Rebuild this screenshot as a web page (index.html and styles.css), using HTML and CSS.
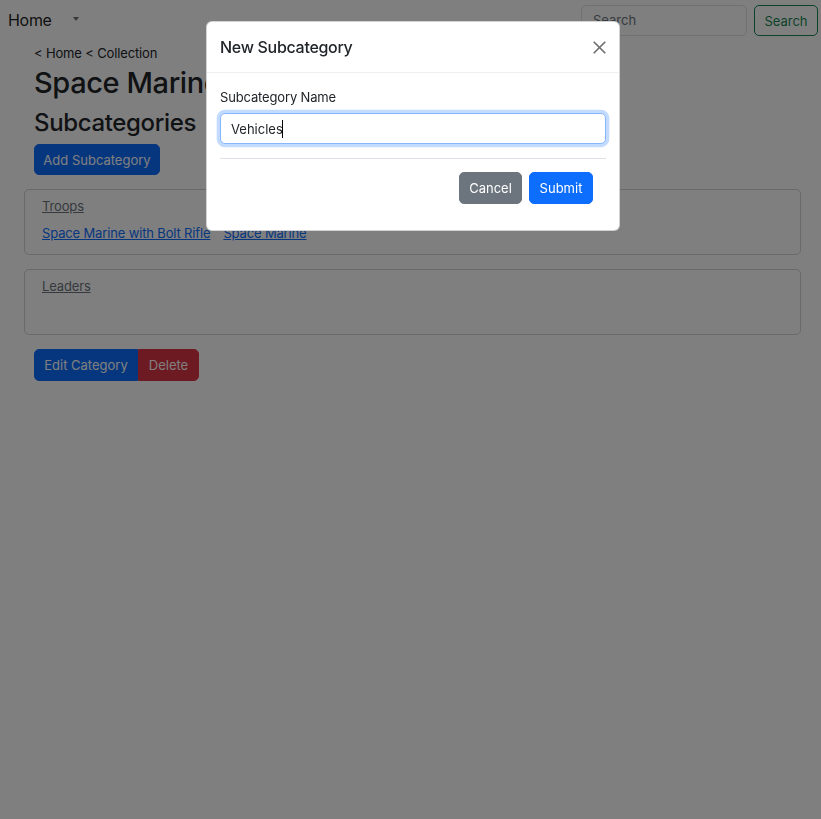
FILE: index.html
```html
<!DOCTYPE html>
<html lang="en">
<head>
<meta charset="utf-8">
<title>Space Marines</title>
<link rel="stylesheet" href="styles.css">
</head>
<body>
<nav class="navbar">
  <a class="brand" href="#">Home</a>
  <span class="dropdown-toggle"></span>
  <form class="search">
    <input class="search-input" type="text" placeholder="Search">
    <button class="btn btn-outline-success" type="button">Search</button>
  </form>
</nav>

<main class="page">
  <div class="head">
    <div class="crumbs">&lt; Home &lt; Collection</div>
    <h1 class="title">Space Marines</h1>
    <h2 class="subtitle">Subcategories</h2>
    <button class="btn btn-primary" type="button">Add Subcategory</button>
  </div>

  <section class="card">
    <a class="card-title" href="#">Troops</a>
    <div class="card-links">
      <a href="#">Space Marine with Bolt Rifle</a>
      <a href="#">Space Marine</a>
    </div>
  </section>

  <section class="card">
    <a class="card-title" href="#">Leaders</a>
    <div class="card-links"></div>
  </section>

  <div class="actions">
    <button class="btn btn-primary btn-left" type="button">Edit Category</button>
    <button class="btn btn-danger btn-right" type="button">Delete</button>
  </div>
</main>

<div class="backdrop"></div>

<div class="modal">
  <div class="modal-dialog">
    <div class="modal-header">
      <h5 class="modal-title">New Subcategory</h5>
      <button class="btn-close" type="button" aria-label="Close">
        <svg width="13" height="13" viewBox="0 0 13 13"><path d="M0.7 0.7 L12.3 12.3 M12.3 0.7 L0.7 12.3" stroke="#6c6c6c" stroke-width="1.6" fill="none"/></svg>
      </button>
    </div>
    <div class="modal-body">
      <label class="form-label" for="name">Subcategory Name</label>
      <div class="field">
        <input class="form-control" id="name" type="text" value="Vehicles">
        <span class="caret-mirror">Vehicles</span>
      </div>
      <div class="modal-footer">
        <button class="btn btn-secondary" type="button">Cancel</button>
        <button class="btn btn-primary" type="button">Submit</button>
      </div>
    </div>
  </div>
</div>
</body>
</html>
```

FILE: styles.css
```css
* { box-sizing: border-box; }

html, body {
  margin: 0;
  padding: 0;
}

body {
  font-family: Inter, "Liberation Sans", Arial, sans-serif;
  font-size: 13px;
  letter-spacing: -0.15px;
  line-height: 1.5;
  color: #212529;
  background: #fff;
  min-height: 819px;
}

/* Navbar */
.navbar {
  display: flex;
  align-items: center;
  height: 40px;
  padding: 0 3px 0 8px;
}

.brand {
  font-size: 16px;
  letter-spacing: -0.3px;
  color: rgba(0, 0, 0, 0.9);
  text-decoration: none;
  line-height: 24px;
}

.dropdown-toggle {
  display: inline-block;
  margin-left: 21px;
  margin-top: -2px;
  width: 0;
  height: 0;
  border-top: 4px solid rgba(0, 0, 0, 0.55);
  border-left: 3.5px solid transparent;
  border-right: 3.5px solid transparent;
}

.search {
  margin-left: auto;
  display: flex;
  gap: 7px;
  padding-top: 1px;
}

.search-input {
  width: 166px;
  height: 31px;
  border: 1px solid #dee2e6;
  border-radius: 5px;
  padding: 4px 11px;
  font: inherit;
  color: #212529;
  background: #fff;
}

.search-input::placeholder { color: #6c757d; }

/* Buttons */
.btn {
  display: inline-block;
  height: 31.4px;
  padding: 0 10px;
  font: inherit;
  font-size: 13px;
  line-height: 30.4px;
  border: 1px solid transparent;
  border-radius: 5px;
  background: transparent;
  cursor: pointer;
  white-space: nowrap;
}

.btn-primary { background: #0d6efd; border-color: #0d6efd; color: #fff; }
.btn-secondary { background: #6c757d; border-color: #6c757d; color: #fff; }
.btn-danger { background: #dc3545; border-color: #dc3545; color: #fff; }
.btn-outline-success { border-color: #198754; color: #198754; width: 64px; padding: 0; text-align: center; }

.btn-left { border-top-right-radius: 0; border-bottom-right-radius: 0; }
.btn-right { border-top-left-radius: 0; border-bottom-left-radius: 0; }

/* Page */
.page {
  padding: 0 20px 0 24px;
}

.head {
  padding-left: 10px;
}

.crumbs {
  line-height: 20px;
  margin-top: 3px;
}

.title {
  margin: 2px 0 6px;
  font-size: 29px;
  letter-spacing: -0.4px;
  font-weight: 500;
  line-height: 36px;
}

.subtitle {
  margin: 0 0 5px;
  font-size: 24px;
  letter-spacing: -0.35px;
  font-weight: 500;
  line-height: 32px;
}

.head .btn { width: 126px; padding: 0; text-align: center; }

.card {
  margin-top: 14px;
  border: 1px solid rgba(0, 0, 0, 0.175);
  border-radius: 5px;
  padding: 6px 17px 11px;
}

.card-title {
  display: block;
  width: max-content;
  color: #6c757d;
  line-height: 20px;
  margin-bottom: 7px;
}

.card-links {
  display: flex;
  gap: 13px;
  min-height: 20px;
  line-height: 20px;
}

.card-links a { color: #0d6efd; }

.actions {
  margin-top: 14px;
  padding-left: 10px;
  display: flex;
}

.actions .btn-left { width: 104px; padding: 0; text-align: center; }
.actions .btn-right { width: 61px; padding: 0; text-align: center; }

/* Backdrop + modal */
.backdrop {
  position: fixed;
  inset: 0;
  background: rgba(0, 0, 0, 0.5);
}

.modal {
  position: fixed;
  inset: 0;
}

.modal-dialog {
  width: 414px;
  margin: 21px 0 0 206px;
  background: #fff;
  border-radius: 6px;
  border: 1px solid rgba(0, 0, 0, 0.175);
}

.modal-header {
  display: flex;
  align-items: center;
  justify-content: space-between;
  padding: 13px;
  border-bottom: 1px solid #eef0f2;
  height: 51px;
}

.modal-title {
  margin: 0;
  font-size: 16px;
  letter-spacing: -0.3px;
  font-weight: 500;
  line-height: 24px;
}

.btn-close {
  border: 0;
  background: transparent;
  padding: 0;
  width: 13px;
  height: 13px;
  display: flex;
}

.modal-body {
  padding: 13px;
}

.form-label {
  display: block;
  line-height: 20px;
  margin-top: 1px;
  margin-bottom: 6px;
}

.field {
  position: relative;
}

.form-control {
  display: block;
  width: 100%;
  height: 31.4px;
  padding: 0 10px;
  font: inherit;
  color: #212529;
  border: 1px solid #86b7fe;
  border-radius: 5px;
  box-shadow: 0 0 0 3.3px rgba(13, 110, 253, 0.25);
  outline: none;
  background: #fff;
}

.caret-mirror {
  position: absolute;
  left: 11px;
  top: 7px;
  line-height: 18px;
  color: transparent;
  border-right: 1px solid #000;
  pointer-events: none;
}

.modal-footer {
  margin-top: 14px;
  border-top: 1px solid #dee2e6;
  padding: 10px;
  display: flex;
  justify-content: flex-end;
  gap: 4px;
}

.modal-footer .btn { margin: 3px; }
.modal-footer .btn + .btn { margin-left: 0; }
.modal-footer .btn-secondary { width: 63px; padding: 0; text-align: center; }
.modal-footer .btn-primary { width: 64px; padding: 0; text-align: center; }
```
